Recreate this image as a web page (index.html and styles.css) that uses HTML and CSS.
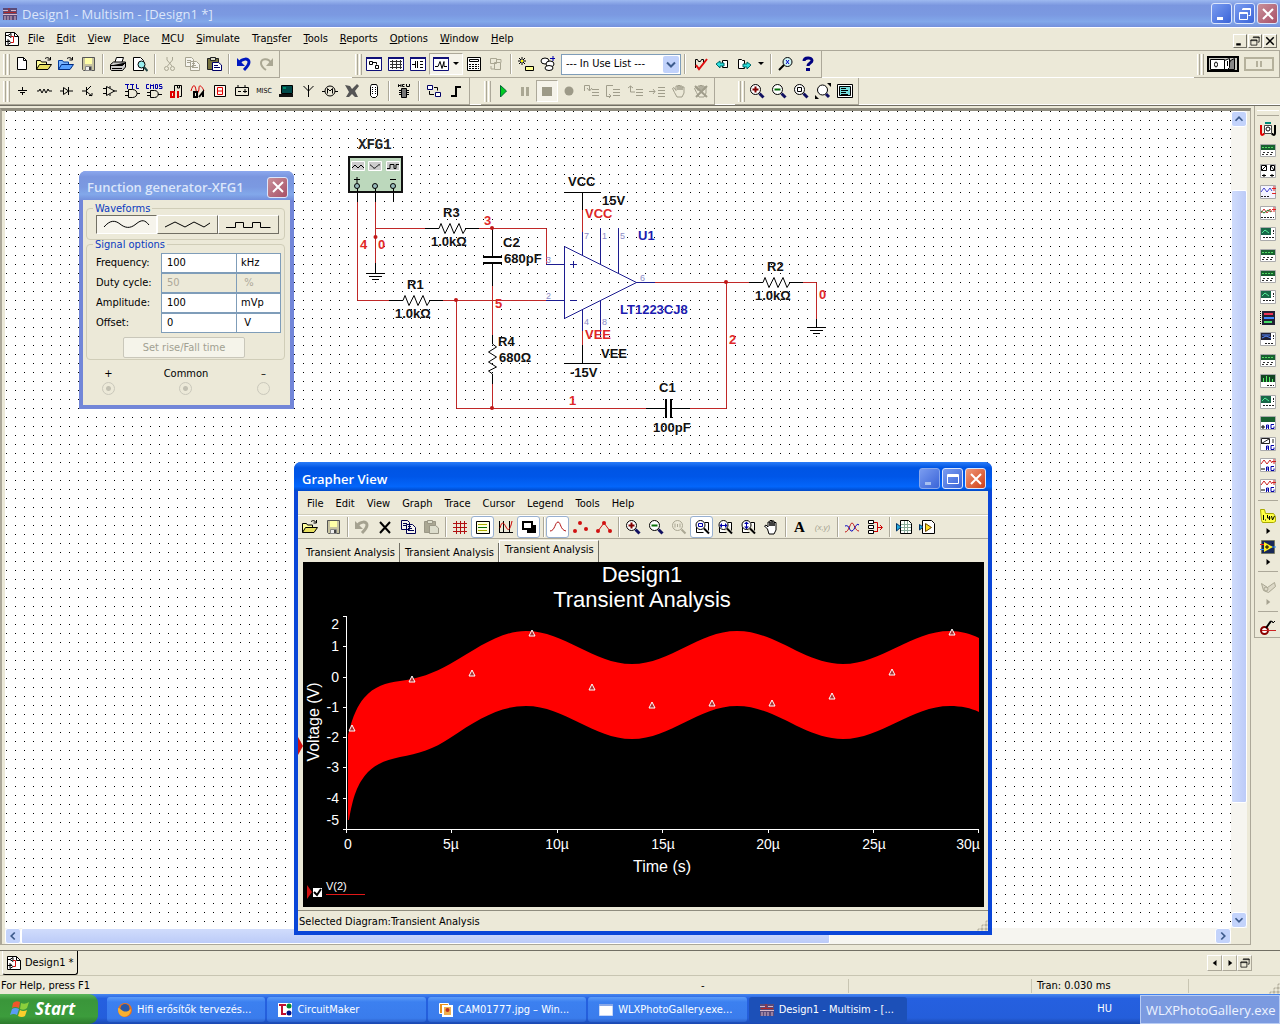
FILE: index.html
```html
<!DOCTYPE html>
<html lang="en">
<head>
<meta charset="utf-8">
<title>Design1 - Multisim - [Design1 *]</title>
<link rel="stylesheet" href="styles.css">
</head>
<body>
<svg class="defs" aria-hidden="true">
  <symbol id="app" viewBox="0 0 16 16"><path fill="#5a4a78" d="M1 2h14v12H1z"/><path stroke="#d8b8c8" fill="none" d="M1 4.500h5M9 4.500h5M1 8.500h14M3 10v4M6 10v4M9 10v4M13 10v4"/><path stroke="#b02828" d="M2 6.500h12M7 2v5"/></symbol>
  <symbol id="doc" viewBox="0 0 16 16"><path fill="#fff" stroke="#000" d="M1.500 1.500h9l4 4v9h-13z"/><path fill="none" stroke="#000" d="M10.500 1.500v4h4M1 4.500h3l3-2v4l-3-2M2 10.500h4l-2-2v5l3-2"/><path fill="none" stroke="#d01010" d="M7 5.500h2.500v6H7"/></symbol>
  <symbol id="new" viewBox="0 0 16 16"><path fill="#fff" stroke="#000" d="M3.500 1.500h6l3 3v9h-9z"/><path fill="none" stroke="#000" d="M9.500 1.500v3h3"/></symbol>
  <symbol id="open" viewBox="0 0 16 16"><path fill="#ffff9c" stroke="#000" d="M.500 13.500v-9h4l1 1.500h5v2.500"/><path fill="#e8e060" stroke="#000" d="M.500 13.500l3-5h12l-3.500 5z"/><path fill="none" stroke="#000" d="M9 2.500c2-1.500 4-1 5 1M14.500 1v3h-3"/></symbol>
  <symbol id="openb" viewBox="0 0 16 16"><path fill="#7ab4ff" stroke="#003a9c" d="M.500 13.500v-9h4l1 1.500h5v2.500"/><path fill="#58a0ff" stroke="#002a80" d="M.500 13.500l3-5h12l-3.500 5z"/><path fill="none" stroke="#000" d="M9 2.500c2-1.500 4-1 5 1M14.500 1v3h-3"/></symbol>
  <symbol id="save" viewBox="0 0 16 16"><path fill="#c8c4a0" stroke="#555" d="M2.500 1.500h12v13h-11l-1-1z"/><path fill="#ffffa8" d="M5 2h7v6H5z"/><path fill="#eee" stroke="#888" d="M5.500 10.500h6v4h-6z"/><path fill="#444" d="M9 11h2v3H9z"/></symbol>
  <symbol id="print" viewBox="0 0 16 16"><path fill="#fff" stroke="#000" d="M5 6l1.500-4.500h7L12 6"/><path fill="#ccc" stroke="#000" d="M.500 8.500l3-2.500h12v5l-3 3.500H1.500l-1-1z"/><path stroke="#000" d="M1 9.500h11.500l3-3M2 12.500h10"/></symbol>
  <symbol id="preview" viewBox="0 0 16 16"><path fill="#fff" stroke="#000" d="M1.500 1.500h7l3 3v10h-10z"/><circle cx="9.500" cy="8.500" r="3.500" fill="#9ee" stroke="#000"/><path stroke="#244" stroke-width="2" d="M12 11l3.500 4"/></symbol>
  <symbol id="cut" viewBox="0 0 16 16"><path fill="none" stroke="#a9a693" d="M5 1v3l5 6M10.500 1v3L5.500 10"/><circle cx="4.500" cy="12.500" r="2" fill="none" stroke="#a9a693"/><circle cx="10.500" cy="12.500" r="2" fill="none" stroke="#a9a693"/></symbol>
  <symbol id="copy" viewBox="0 0 16 16"><path fill="#f6f5ee" stroke="currentColor" d="M1.500 1.500h6l2 2v7h-8zM6.500 5.500h6l3 3v6h-9z"/><path stroke="currentColor" d="M3 4.500h4M3 6.500h3M8 9.500h4M8 11.500h6M8 7.500h3"/></symbol>
  <symbol id="paste" viewBox="0 0 16 16"><path fill="#77733f" stroke="#222" d="M1.500 2.500h11v11h-11z"/><path fill="#ddc" stroke="#222" d="M4.500 1.500h5v3h-5z"/><path fill="#fff" stroke="#006" d="M6.500 6.500h6l3 2.500v5.500h-9z"/><path stroke="#006" d="M8 9.500h4M8 11.500h6"/></symbol>
  <symbol id="pasteg" viewBox="0 0 16 16"><path fill="#aaa793" stroke="#9a9786" d="M1.500 2.500h11v11h-11z"/><path fill="#ddc" stroke="#9a9786" d="M4.500 1.500h5v3h-5zM6.500 6.500h6l3 2.500v5.500h-9z"/></symbol>
  <symbol id="undo" viewBox="0 0 16 16"><path fill="none" stroke="currentColor" stroke-width="3" d="M3 7c3-5 10-5 10-1 0 3-2 5-5 8"/><path fill="currentColor" d="M1 2v8h8z"/></symbol>
  <symbol id="redo" viewBox="0 0 16 16"><path fill="none" stroke="#aaa793" stroke-width="2" d="M13 7C10 1 3 3 3 7c0 3 2 5 5 7"/><path fill="#aaa793" d="M15 2v8H8z"/></symbol>
  <symbol id="hier" viewBox="0 0 16 16"><path fill="#fff" stroke="#101078" d="M.500 1.500h15v13H.500z"/><path fill="#101078" d="M0 1h16v2H0z"/><path fill="none" stroke="#000" d="M3.500 5.500h3v3h-3zM9.500 9.500h3v3h-3zM7 6.500h3.500v2"/></symbol>
  <symbol id="grid" viewBox="0 0 16 16"><path fill="#fff" stroke="#101078" d="M.500 1.500h15v13H.500z"/><path fill="#101078" d="M0 1h16v2H0z"/><path stroke="#333" d="M2 5.500h12M2 8.500h12M2 11.500h12M4.500 4v9M8.500 4v9M12.500 4v9"/></symbol>
  <symbol id="capw" viewBox="0 0 16 16"><path fill="#fff" stroke="#101078" d="M.500 1.500h15v13H.500z"/><path fill="#101078" d="M0 1h16v2H0z"/><path stroke="#000" d="M2 8.500h3M5.500 5v7M7.500 5v7M10 5.500h3M10 8.500h3M10 11.500h3"/></symbol>
  <symbol id="wavew" viewBox="0 0 16 16"><path fill="#fff" stroke="#101078" d="M.500 1.500h15v13H.500z"/><path fill="#101078" d="M0 1h16v2H0z"/><path fill="none" stroke="#000" d="M2 10.500h3l2-5 2 7 2-7v5h3"/></symbol>
  <symbol id="calc" viewBox="0 0 16 16"><path fill="#fff" stroke="#000" d="M1.500 1.500h13v13h-13zM3.500 3.500h9v2h-9z"/><path stroke="#000" stroke-dasharray="2 1" d="M3 8.500h10M3 10.500h10M3 12.500h10"/></symbol>
  <symbol id="dup" viewBox="0 0 16 16"><path fill="none" stroke="#aaa793" d="M2.500 2.500h6v5h-6zM6.500 6.500h6v7h-6zM9 3.500h4v3M3 10v3h3"/></symbol>
  <symbol id="spark" viewBox="0 0 16 16"><path stroke="#000" d="M4 1v8M0 5h8M1 2l6 6M7 2L1 8"/><path fill="#ff0" d="M3 4h2v2H3z"/><path fill="#ffff90" stroke="#000" d="M7.500 10.500h8v4h-8z"/></symbol>
  <symbol id="db" viewBox="0 0 16 16"><g fill="#fff" stroke="#000"><ellipse cx="5" cy="5" rx="4" ry="3"/><ellipse cx="10" cy="8" rx="4" ry="3"/><ellipse cx="9" cy="12" rx="4" ry="2.500"/></g><path stroke="#00a" d="M10 2.500h5M13 0v5"/></symbol>
  <symbol id="erc" viewBox="0 0 16 16"><path fill="none" stroke="#000" d="M3.500 12V3.500h2l1 2h2l1-2h2V8"/><path fill="none" stroke="#e01010" stroke-width="2" d="M4 9l3 4 8-10"/></symbol>
  <symbol id="back" viewBox="0 0 16 16"><path fill="#fff" stroke="#000" d="M8.500 4.500h5v7h-5z"/><path fill="#2ce0e0" stroke="#066" d="M2 8l4-3v2h4v3H6v2z"/></symbol>
  <symbol id="fwd" viewBox="0 0 16 16"><path fill="#fff" stroke="#000" d="M2.500 3.500h3l1 1h2v8h-6z"/><path fill="#2ce0e0" stroke="#066" d="M15 9l-4-3v2H7v3h4v2z"/></symbol>
  <symbol id="find" viewBox="0 0 16 16"><circle cx="9.500" cy="6" r="4.500" fill="#d0f4f4" stroke="#000"/><path stroke="#000" stroke-width="2" d="M6 9l-5 5"/><path stroke="#00c" d="M8 4l3 4M8 8l3-4"/></symbol>
  <symbol id="help" viewBox="0 0 16 16"><path fill="none" stroke="#000080" stroke-width="3" d="M4 5c0-4 8-4 8-.500 0 2.500-4 2.500-4 5.500"/><path fill="#000080" d="M6 12h4v3H6z"/></symbol>
  <symbol id="src" viewBox="0 0 16 16"><path fill="none" stroke="#000" d="M8.500 4v3M4 7.500h9M6 9.500h5M8.500 10v2"/></symbol>
  <symbol id="res" viewBox="0 0 16 16"><path fill="none" stroke="#000" d="M1 8h2l1-2 2 4 2-4 2 4 2-4 1 2h3"/></symbol>
  <symbol id="dio" viewBox="0 0 16 16"><path fill="none" stroke="#000" d="M2 8h3M5.500 4.500v7l5-3.500zM10.500 4v8M11 8h4"/></symbol>
  <symbol id="tran" viewBox="0 0 16 16"><path fill="none" stroke="#000" d="M2 8h4M6.500 4v8M7 7l4-4M7 9l5 4M9 12.500h3V10"/></symbol>
  <symbol id="amp" viewBox="0 0 16 16"><path fill="none" stroke="#000" d="M4.500 3.500v9l8-4.500zM1 5.500h3M1 10.500h3M12 8h3M8 3v2M8 11v2"/></symbol>
  <symbol id="ttl" viewBox="0 0 18 16"><path fill="none" stroke="#00a" d="M2 1.500h4M4.500 2v4M7 1.500h4M9.500 2v4M13.500 1v4.500H16"/><path fill="none" stroke="#000" d="M5.500 6.500h4c6 0 6 8 0 8h-4zM2 8.500h3M2 12.500h3M14 10.500h3"/></symbol>
  <symbol id="cmos" viewBox="0 0 18 16"><path fill="none" stroke="#00a" d="M4 1.500H1.500v4H4M5.500 6V1.500L7 3l1.500-1.500V6M10.500 1.500h2v4h-2zM17 1.500h-2.500v2H17v2h-3"/><path fill="none" stroke="#000" d="M5.500 7.500h4c5 0 5 7 0 7h-4zM2 9.500h3M2 12.500h3M13 11.500h4"/></symbol>
  <symbol id="dig" viewBox="0 0 16 16"><path fill="none" stroke="#000" d="M6.500 8V2.500h7v11h-2M9.500 3v2h2V3"/><path fill="none" stroke="#d00" stroke-width="2" d="M3 9h3v5H3zM10 8v7"/></symbol>
  <symbol id="mix" viewBox="0 0 16 16"><path fill="none" stroke="#d00" d="M1 8c2-7 4-7 5-1s3 2 3-2 3-2 5 3"/><path fill="none" stroke="#000" stroke-width="2" d="M4 9h3v5H4zM9 14l4-5v5"/></symbol>
  <symbol id="ind" viewBox="0 0 16 16"><path fill="#fff4ee" stroke="#000" d="M2.500 2.500h11v11h-11z"/><path fill="none" stroke="#d00" d="M5.500 4.500h5v7h-5zM5 8h6"/></symbol>
  <symbol id="pow" viewBox="0 0 16 16"><path fill="none" stroke="#000" d="M1.500 4.500h13v8h-13zM4 2v2M11 2v2M4 8.500h3M9 8.500h4M11 6v4"/></symbol>
  <symbol id="per" viewBox="0 0 16 16"><path fill="#004848" stroke="#000" d="M3.500 2.500h11v8h-11z"/><path fill="#111" d="M1 11h14v3H1z"/><path stroke="#0c8" d="M5 5h3"/></symbol>
  <symbol id="rf" viewBox="0 0 16 16"><path fill="none" stroke="#000" d="M8.500 2v12M3.500 3l5 5 5-5"/></symbol>
  <symbol id="mot" viewBox="0 0 16 16"><circle cx="8" cy="8" r="5" fill="none" stroke="#000"/><path fill="none" stroke="#000" d="M5.500 10.500v-5L8 8l2.500-2.500v5M0 8.500h3M13 8.500h3"/></symbol>
  <symbol id="ni" viewBox="0 0 16 16"><path fill="#555" d="M1 2l5 1 2 3 5-5 2 2-4 5 3 6h-3L8 11l-3 3H2l3-5z"/></symbol>
  <symbol id="conn" viewBox="0 0 16 16"><path fill="#fff" stroke="#000" d="M5.500 1.500h5l1 2v9l-2 2h-3l-2-2v-9z"/><path stroke="#000" stroke-dasharray="1 1" d="M6.500 4v8M9.500 4v8"/></symbol>
  <symbol id="mcu" viewBox="0 0 16 16"><path fill="none" stroke="#000" d="M2.500 4V1.500L4 3l1-1.500V4M8.500 1.500h-2v2h2M10.500 1v2.500h3V1"/><path fill="#777" stroke="#000" d="M5.500 5.500h5v9h-5z"/><path stroke="#000" stroke-dasharray="3 5" d="M3 7.500h10M3 9.500h10M3 11.500h10"/></symbol>
  <symbol id="hb" viewBox="0 0 16 16"><path fill="#fff" stroke="#006" d="M1.500 2.500h5v4h-5zM9.500 9.500h5v4h-5z"/><path fill="none" stroke="#000" d="M8 4.500h3.500v3M3.500 8v3.500H8"/></symbol>
  <symbol id="bus" viewBox="0 0 16 16"><path fill="none" stroke="#000" stroke-width="2" d="M3 13h5V4h5"/></symbol>
  <symbol id="play" viewBox="0 0 16 16"><path fill="#0c2" stroke="#063" d="M5.500 2.500l6 5.500-6 6z"/></symbol>
  <symbol id="pause" viewBox="0 0 16 16"><path fill="#aaa793" d="M4 4h3v9H4zM9 4h3v9H9z"/></symbol>
  <symbol id="stop" viewBox="0 0 16 16"><path fill="#9d9a88" d="M3 4h10v9H3z"/></symbol>
  <symbol id="rec" viewBox="0 0 16 16"><circle cx="8" cy="8" r="4.500" fill="#9d9a88"/></symbol>
  <symbol id="step" viewBox="0 0 16 16"><path fill="none" stroke="#a09d8b" d="M1.500 8V2.500h5v5M4 5l2.500 3L9 5M9 6.500h7M9 9.500h7M9 12.500h7"/></symbol>
  <symbol id="step2" viewBox="0 0 16 16"><path fill="none" stroke="#a09d8b" d="M8 2.500H1.500v11H6M4 11l2 2-2 2M8 6.500h7M8 9.500h7M8 12.500h7"/></symbol>
  <symbol id="step3" viewBox="0 0 16 16"><path fill="none" stroke="#a09d8b" d="M1 5l2.500-2L6 5M3.500 3v6H8M9 6.500h7M9 9.500h7M9 12.500h7"/></symbol>
  <symbol id="step4" viewBox="0 0 16 16"><path fill="none" stroke="#a09d8b" d="M0 8.500h6M4 6l2 2.500L4 11M9 4.500h7M9 7.500h7M9 10.500h7M9 13.500h7"/></symbol>
  <symbol id="hand" viewBox="0 0 16 16"><path fill="#fff" stroke="#000" d="M4.500 10l-3-3 1.500-1 2 2V3h2v4V1.500h2V7l0-5h2v5l0-3.500h2V11l-2 4h-5z"/></symbol>
  <symbol id="handg" viewBox="0 0 16 16"><path fill="none" stroke="#a09d8b" d="M3.500 9.500l-2-4 1.500-1 2 3V3h2v4V2.500h2V7l0-4h2v4l0-3h2V10l-2 4h-5z"/></symbol>
  <symbol id="handx" viewBox="0 0 16 16"><use href="#handg"/><path stroke="#a09d8b" stroke-width="2" d="M2 3l12 11M14 3L3 14"/></symbol>
  <symbol id="lens" viewBox="0 0 16 16"><circle cx="6.500" cy="6.500" r="5" fill="#fff" stroke="#000"/><path stroke="#101060" stroke-width="3" d="M10.500 10.500l4 4"/></symbol>
  <symbol id="zin" viewBox="0 0 16 16"><use href="#lens"/><path stroke="#800000" stroke-width="2" d="M3.500 6.500h6M6.500 3.500v6"/></symbol>
  <symbol id="zout" viewBox="0 0 16 16"><use href="#lens"/><path stroke="#087008" stroke-width="2" d="M3.500 6.500h6"/></symbol>
  <symbol id="zarea" viewBox="0 0 16 16"><use href="#lens"/><path fill="none" stroke="#000" d="M4.500 4.500h4v4h-4z"/></symbol>
  <symbol id="zfit" viewBox="0 0 16 16"><circle cx="7.500" cy="7" r="5" fill="#fff" stroke="#000"/><path stroke="#101060" stroke-width="3" d="M11 11l3 3"/><path d="M12 0h4v4zM0 12v4h4z"/></symbol>
  <symbol id="full" viewBox="0 0 16 16"><path fill="#fff" stroke="#000" d="M.500 1.500h15v13H.500z"/><path fill="#7dd" stroke="#000" d="M2.500 3.500h11v9h-11z"/><path stroke="#000" d="M4 5.500h5M4 7.500h7M4 9.500h5M4 11.500h7"/></symbol>
  <symbol id="zgray" viewBox="0 0 16 16"><circle cx="6.500" cy="6.500" r="5" fill="none" stroke="#aaa793"/><path stroke="#aaa793" stroke-width="2" d="M10.500 10.500l4 4"/><path stroke="#aaa793" d="M4 4.500v4M6.500 5v3M9 4.500v4"/></symbol>
  <symbol id="zpage" viewBox="0 0 16 16"><path fill="#fff" stroke="#000" d="M2.500 8v5.500h7M11 3.500h3.500v8"/><circle cx="6.500" cy="6" r="4.500" fill="#fff" stroke="#000"/><path stroke="#000" stroke-width="2" d="M10 9.500l5 5"/></symbol>
  <symbol id="zbox" viewBox="0 0 16 16"><use href="#zpage"/><path fill="none" stroke="#00a" d="M4.500 4.500h4v3h-4z"/></symbol>
  <symbol id="zhor" viewBox="0 0 16 16"><use href="#zpage"/><path stroke="#00a" d="M3 6.500h7"/><path fill="#00a" d="M2.500 6.500L5 4v5zM10.500 6.500L8 4v5z"/></symbol>
  <symbol id="zver" viewBox="0 0 16 16"><use href="#zpage"/><path stroke="#00a" d="M6.500 3v7"/><path fill="#00a" d="M6.500 2.500L4 5h5zM6.500 10L4 7.500h5z"/></symbol>
  <symbol id="del" viewBox="0 0 16 16"><path stroke="#000" stroke-width="2" d="M3 3l10 11M13 3L3 14"/></symbol>
  <symbol id="rgrid" viewBox="0 0 16 16"><path stroke="#b01010" d="M1 4.500h14M1 8.500h14M1 12.500h14M4.500 2v13M8.500 2v13M12.500 2v13"/></symbol>
  <symbol id="legend" viewBox="0 0 16 16"><path fill="#ffffe0" stroke="#000" d="M1.500 2.500h13v12h-13z"/><path stroke="#aa0" d="M3 5.500h9M3 11.500h9"/><path stroke="#060" d="M3 8.500h9"/></symbol>
  <symbol id="curs" viewBox="0 0 16 16"><path fill="none" stroke="#000" d="M1.500 2v12M1 13.500h14M5.500 2v12M11.500 2v12"/><path fill="none" stroke="#c00" d="M2 9c2-8 4-5 6-1s4 4 6-6"/></symbol>
  <symbol id="bw" viewBox="0 0 16 16"><path fill="#fff" stroke="#000" stroke-width="2" d="M2 3h9v7H2z"/><path d="M6 6h9v8H6z"/><path fill="#fff" d="M6 6h4v3H6z"/></symbol>
  <symbol id="line" viewBox="0 0 16 16"><path fill="none" stroke="#b01010" d="M0 12c5 0 5-9 8-9s2 8 8 9"/></symbol>
  <symbol id="dots" viewBox="0 0 16 16"><g fill="#d01010"><circle cx="2" cy="12" r="2"/><circle cx="7" cy="4" r="2"/><circle cx="13" cy="10" r="2"/></g></symbol>
  <symbol id="ldots" viewBox="0 0 16 16"><path fill="none" stroke="#d01010" d="M2 12l6-8 6 8"/><g fill="#d01010"><circle cx="2" cy="12" r="2"/><circle cx="8" cy="4" r="2"/><circle cx="14" cy="12" r="2"/></g></symbol>
  <symbol id="over" viewBox="0 0 16 16"><path fill="none" stroke="#c01010" d="M1 13c4 0 5-9 7-9s3 8 7 8"/><path fill="none" stroke="#0000c0" d="M1 7c5-2 4 6 7 5s4-9 7-6"/></symbol>
  <symbol id="xport" viewBox="0 0 16 16"><path fill="#fff" stroke="#000" d="M1.500 1.500h5v3h-5zM1.500 6.500h5v3h-5zM1.500 11.500h5v3h-5z"/><path fill="none" stroke="#c00" d="M7 3.500h3.500v9M7 12.500h4M10 8.500h5M13 6l2.500 2.500L13 11"/></symbol>
  <symbol id="xls" viewBox="0 0 16 16"><path fill="#fff" stroke="#000" d="M4.500 1.500h8l3 3v10h-11z"/><path stroke="#8a9" d="M5 5.500h10M5 8.500h10M5 11.500h10M8.500 2v12M11.500 2v12"/><path fill="#2ad" stroke="#036" d="M.500 4.500L5 8l-4.500 4z"/></symbol>
  <symbol id="lv" viewBox="0 0 16 16"><path fill="#fff" stroke="#000" d="M3.500 1.500h9l3 3v10h-12z"/><path fill="#fd2" stroke="#640" d="M6.500 4.500l6 4-6 4z"/><path fill="#2ad" stroke="#036" d="M.500 5.500L4 8l-3.500 3z"/></symbol>
  <symbol id="m1" viewBox="0 0 16 16"><path fill="none" stroke="#d00" stroke-width="2" d="M1 4v8c0 3 3 2 3 0"/><path fill="none" stroke="#000" stroke-width="2" d="M15 4v8c0 3-3 2-3 0"/><path fill="#fff" stroke="#444" d="M4.500 4.500h7v8h-7z"/><circle cx="8" cy="8" r="2" fill="#fff" stroke="#000"/><path fill="#087" d="M5 1h6v2H5z"/></symbol>
  <symbol id="inst" viewBox="0 0 16 16"><path fill="#fff" stroke="#aaa" d="M.500 2.500h15v12H.500z"/><path fill="#186030" d="M1 3h14v5H1z"/><path stroke="#5d6" stroke-dasharray="2 1" d="M2 5.500h12"/><path stroke="#333" stroke-dasharray="2 2" d="M3 10.500h11M2 12.500h11"/></symbol>
  <symbol id="inst2" viewBox="0 0 16 16"><path fill="#fff" stroke="#aaa" d="M.500 1.500h15v13H.500z"/><path fill="none" stroke="#000" d="M1.500 2.500h5v5h-5zM10.500 2.500h4v5h-4zM2 7l4-4M11 3l3 4M2 12.500h4M4 11v3M10 12.500h4M12 11v3"/></symbol>
  <symbol id="osc" viewBox="0 0 16 16"><path fill="#f4f4ff" stroke="#aaa" d="M.500 1.500h15v13H.500z"/><path fill="none" stroke="#44c" d="M1 8l3-4 3 4 3-4 2 3"/><path stroke="#d22" d="M12 4.500h4M14 2v5M12 9.500h4"/><path stroke="#222" stroke-dasharray="2 1" d="M1 12.500h8"/></symbol>
  <symbol id="osc2" viewBox="0 0 16 16"><path fill="#fff" stroke="#aaa" d="M.500 1.500h15v13H.500z"/><path fill="none" stroke="#c33" d="M1 8l3-4 3 4 3-4 2 3"/><path fill="none" stroke="#272" d="M1 6l3 2 4-3 3 2"/><path stroke="#d22" d="M12 4.500h4M14 2v5"/><path stroke="#222" stroke-dasharray="2 1" d="M1 12.500h13"/></symbol>
  <symbol id="bode" viewBox="0 0 16 16"><path fill="#fff" stroke="#aaa" d="M.500 1.500h15v13H.500z"/><path fill="#186848" d="M1 2h10v7H1z"/><path fill="none" stroke="#5e9" d="M2 7l3-3 4 3"/><path stroke="#222" stroke-dasharray="2 1" d="M3 11.500h11M13.500 4v4"/></symbol>
  <symbol id="iv" viewBox="0 0 16 16"><path fill="#fff" stroke="#aaa" d="M.500 1.500h15v13H.500z"/><path fill="#223" d="M1 2h10v7H1z"/><path fill="none" stroke="#58f" d="M2 4h8M2 7l4-2 5 2"/><path stroke="#222" stroke-dasharray="2 1" d="M5 12.500h9M13.500 4v4"/></symbol>
  <symbol id="logic" viewBox="0 0 16 16"><path fill="#223" d="M2 1h13v14H2z"/><path stroke="#e35" stroke-width="2" d="M4 4h9"/><path stroke="#48f" stroke-width="2" d="M4 8h10"/><path stroke="#4d6" stroke-width="2" d="M4 12h8"/><path stroke="#000" stroke-dasharray="1 1" d="M.500 1v14"/></symbol>
  <symbol id="spec" viewBox="0 0 16 16"><path fill="#fff" stroke="#aaa" d="M.500 1.500h15v13H.500z"/><path fill="#134422" d="M1 2h14v7H1z"/><path stroke="#5e6" d="M3.500 9V5M6.500 9V3M9.500 9V4M12.500 9V6"/><path stroke="#222" stroke-dasharray="2 1" d="M7 12.500h7"/></symbol>
  <symbol id="ag" viewBox="0 0 16 16"><path fill="#fff" stroke="#aaa" d="M.500 1.500h15v13H.500z"/><path fill="#186030" d="M1 2h14v5H1z"/><path fill="none" stroke="#00a" d="M6.500 14v-4h2v4M6 12h3M14 9.500h-3v4h3v-2"/><path stroke="#000" d="M1 12h4M3 10v4"/></symbol>
  <symbol id="ag2" viewBox="0 0 16 16"><path fill="#fff" stroke="#aaa" d="M.500 1.500h15v13H.500z"/><path fill="none" stroke="#222" d="M1.500 7.500L9 3M1.500 2.500v5h8v-5zM13 3v4"/><path fill="none" stroke="#00a" d="M6.500 14v-4h2v4M6 12h3M14 9.500h-3v4h3v-2"/></symbol>
  <symbol id="ag3" viewBox="0 0 16 16"><path fill="#fff" stroke="#aaa" d="M.500 1.500h15v13H.500z"/><path fill="none" stroke="#c22" d="M1 7l3-4 3 4 3-4 2 3M12 4.500h4M14 2v5"/><path fill="none" stroke="#00a" d="M6.500 14v-4h2v4M6 12h3M14 9.500h-3v4h3v-2"/><path stroke="#000" d="M1 12h4"/></symbol>
  <symbol id="volt" viewBox="0 0 16 16"><path fill="#ff4" stroke="#aa0" d="M.500 1.500h4l1 4h8l2 3v5l-2 1h-11l-1-2z"/><path fill="none" stroke="#000" d="M3.500 7v5M5 12h1M7.500 7v3h3M9.500 8v4M11.500 8l1 4 2-4"/></symbol>
  <symbol id="lvi" viewBox="0 0 16 16"><path fill="#182858" stroke="#663" stroke-dasharray="1 1" d="M1.500 1.500h13v13h-13z"/><path fill="#fe2" d="M4 3l9 5-9 5z"/><path stroke="#e22" d="M0 5.500h4"/><path stroke="#28f" d="M0 10.500h4M12 8h4"/><path stroke="#000" d="M5 8h4M7 6v4"/></symbol>
  <symbol id="clampg" viewBox="0 0 16 16"><path fill="#ddd9c8" stroke="#aaa793" d="M1.500 4.500l6 4 7-5 1 4-7 6-5-2z"/><circle cx="6" cy="10" r="2" fill="none" stroke="#aaa793"/></symbol>
  <symbol id="probe" viewBox="0 0 16 16"><circle cx="4.500" cy="11.500" r="3.500" fill="#fff" stroke="#800" stroke-width="2"/><path stroke="#c22" d="M2 11.500h14"/><path stroke="#000" stroke-width="2" d="M6 9l5-7"/><path fill="none" stroke="#000" d="M10 3l2-1 1 2 2-2"/></symbol>
  <symbol id="min" viewBox="0 0 16 16"><path fill="currentColor" d="M3 11h6v3H3z"/></symbol>
  <symbol id="rest" viewBox="0 0 16 16"><path fill="none" stroke="currentColor" d="M5.500 2.500h8v7h-2M5 3.500h9M2.500 6.500h8v7h-8zM2 7.500h9"/></symbol>
  <symbol id="max" viewBox="0 0 16 16"><path fill="none" stroke="currentColor" d="M2.500 3.500h11v9h-11zM2 4.500h12M2 5.500h12"/></symbol>
  <symbol id="x" viewBox="0 0 16 16"><path stroke="currentColor" stroke-width="2" d="M3 3l10 10M13 3L3 13"/></symbol>
  <symbol id="caret" viewBox="0 0 8 8"><path d="M1 2h6L4 5z"/></symbol>
  <symbol id="right" viewBox="0 0 8 8"><path fill="currentColor" d="M2 0l5 4-5 4z"/></symbol>
  <symbol id="left" viewBox="0 0 8 8"><path fill="currentColor" d="M6 0L1 4l5 4z"/></symbol>
  <symbol id="chev" viewBox="0 0 16 16"><path fill="none" stroke="#3d5b8c" stroke-width="2" d="M4 10l4-4 4 4"/></symbol>
  <symbol id="tri" viewBox="0 0 8 8"><path fill="#a33" stroke="#fff" d="M4 1L1 7h6z"/></symbol>
  <symbol id="rh" viewBox="0 0 54 12"><path fill="none" stroke="#000" d="M0 6.500h14l2-5 4 10 5-10 4 10 5-10 4 10 3-5h13"/></symbol>
</svg>

<header class="titlebar">
  <svg class="ic"><use href="#app"/></svg>
  <h1>Design1 - Multisim - [Design1 *]</h1>
  <div class="winbtns">
    <button class="wb" aria-label="Minimize"><svg class="ic"><use href="#min"/></svg></button>
    <button class="wb" aria-label="Restore"><svg class="ic"><use href="#rest"/></svg></button>
    <button class="wb close" aria-label="Close"><svg class="ic"><use href="#x"/></svg></button>
  </div>
</header>

<nav class="menubar">
  <svg class="ic"><use href="#doc"/></svg>
  <button><u>F</u>ile</button><button><u>E</u>dit</button><button><u>V</u>iew</button><button><u>P</u>lace</button><button><u>M</u>CU</button><button><u>S</u>imulate</button><button>Tra<u>n</u>sfer</button><button><u>T</u>ools</button><button><u>R</u>eports</button><button><u>O</u>ptions</button><button><u>W</u>indow</button><button><u>H</u>elp</button>
  <div class="childbtns">
    <button aria-label="Minimize document"><svg><use href="#min"/></svg></button><button aria-label="Restore document"><svg><use href="#rest"/></svg></button><button aria-label="Close document"><svg><use href="#x"/></svg></button>
  </div>
</nav>

<div class="toolrow">
  <div class="bar"><i class="grip"></i>
    <button aria-label="New"><svg><use href="#new"/></svg></button><button aria-label="Open"><svg><use href="#open"/></svg></button><button aria-label="Open sample"><svg><use href="#openb"/></svg></button><button aria-label="Save"><svg><use href="#save"/></svg></button><i class="sep"></i>
    <button aria-label="Print"><svg><use href="#print"/></svg></button><button aria-label="Print preview"><svg><use href="#preview"/></svg></button><i class="sep"></i>
    <button aria-label="Cut"><svg><use href="#cut"/></svg></button><button class="dim" aria-label="Copy"><svg><use href="#copy"/></svg></button><button aria-label="Paste"><svg><use href="#paste"/></svg></button><i class="sep"></i>
    <button class="blue" aria-label="Undo"><svg><use href="#undo"/></svg></button><button aria-label="Redo"><svg><use href="#redo"/></svg></button>
  </div>
  <div class="bar bar-main"><i class="grip"></i>
    <button aria-label="Design toolbox"><svg><use href="#hier"/></svg></button><button aria-label="Spreadsheet view"><svg><use href="#grid"/></svg></button><button aria-label="SPICE netlist"><svg><use href="#capw"/></svg></button><button class="split" aria-label="Grapher"><svg><use href="#wavew"/></svg><svg class="car"><use href="#caret"/></svg></button><button aria-label="Postprocessor"><svg><use href="#calc"/></svg></button><button aria-label="Parent sheet"><svg><use href="#dup"/></svg></button><i class="sep"></i>
    <button aria-label="Component wizard"><svg><use href="#spark"/></svg></button><button aria-label="Database manager"><svg><use href="#db"/></svg></button>
    <span class="combo"><select aria-label="In use list"><option>--- In Use List ---</option></select><svg class="drop"><use href="#chev"/></svg></span><i class="sep"></i>
    <button aria-label="Rules check"><svg><use href="#erc"/></svg></button><button aria-label="Back annotate"><svg><use href="#back"/></svg></button><button aria-label="Forward annotate"><svg><use href="#fwd"/></svg></button><button class="slim" aria-label="Annotate options"><svg class="car"><use href="#caret"/></svg></button><i class="sep"></i>
    <button aria-label="Find examples"><svg><use href="#find"/></svg></button><button aria-label="Help"><svg><use href="#help"/></svg></button>
  </div>
  <div class="bar bar-sim"><i class="grip"></i>
    <button class="switch" aria-label="Simulation switch"><svg viewBox="0 0 32 18"><path fill="#c8c8c0" stroke="#000" stroke-width="2" d="M1 2h30v14H1z"/><path fill="#888" stroke="#000" d="M23.500 5.500l4-2v11h-8z"/><path fill="#fff" stroke="#000" d="M3.500 4.500h14v10h-14zM17.500 5.500l5-2v9l-2 2h-3z"/><ellipse cx="9" cy="9.500" rx="1.500" ry="2.500" fill="none" stroke="#000"/><path stroke="#000" d="M20.500 6v5"/></svg></button>
    <button class="switch" aria-label="Pause simulation"><svg viewBox="0 0 32 18"><path fill="none" stroke="#b5b19c" stroke-width="2" d="M2 3h28v12H2z"/><path stroke="#b5b19c" stroke-width="2" d="M14 6v6M18 6v6"/></svg></button>
  </div>
</div>
<div class="toolrow">
  <div class="bar"><i class="grip"></i>
    <button aria-label="Source"><svg><use href="#src"/></svg></button><button aria-label="Basic"><svg><use href="#res"/></svg></button><button aria-label="Diode"><svg><use href="#dio"/></svg></button><button aria-label="Transistor"><svg><use href="#tran"/></svg></button><button aria-label="Analog"><svg><use href="#amp"/></svg></button><button class="wide" aria-label="TTL"><svg><use href="#ttl"/></svg></button><button class="wide" aria-label="CMOS"><svg><use href="#cmos"/></svg></button><button aria-label="Digital"><svg><use href="#dig"/></svg></button><button aria-label="Mixed"><svg><use href="#mix"/></svg></button><button aria-label="Indicator"><svg><use href="#ind"/></svg></button><button aria-label="Power"><svg><use href="#pow"/></svg></button><button class="misc">MISC</button><button aria-label="Peripherals"><svg><use href="#per"/></svg></button><button aria-label="RF"><svg><use href="#rf"/></svg></button><button aria-label="Electromechanical"><svg><use href="#mot"/></svg></button><button aria-label="NI component"><svg><use href="#ni"/></svg></button><button aria-label="Connector"><svg><use href="#conn"/></svg></button><i class="sep"></i>
    <button aria-label="MCU"><svg><use href="#mcu"/></svg></button><i class="sep"></i>
    <button aria-label="Hierarchical block"><svg><use href="#hb"/></svg></button><button aria-label="Bus"><svg><use href="#bus"/></svg></button>
  </div>
  <div class="bar bar-run"><i class="grip"></i>
    <button aria-label="Run"><svg><use href="#play"/></svg></button><button aria-label="Pause"><svg><use href="#pause"/></svg></button><button class="down" aria-label="Stop"><svg><use href="#stop"/></svg></button><button aria-label="Record"><svg><use href="#rec"/></svg></button><button aria-label="Step into"><svg><use href="#step"/></svg></button><button aria-label="Step over"><svg><use href="#step2"/></svg></button><button aria-label="Step out"><svg><use href="#step3"/></svg></button><button aria-label="Run to cursor"><svg><use href="#step4"/></svg></button><button aria-label="Breakpoint"><svg><use href="#handg"/></svg></button><button aria-label="Remove breakpoints"><svg><use href="#handx"/></svg></button>
  </div>
  <div class="bar bar-zoom"><i class="grip"></i>
    <button aria-label="Zoom in"><svg><use href="#zin"/></svg></button><button aria-label="Zoom out"><svg><use href="#zout"/></svg></button><button aria-label="Zoom area"><svg><use href="#zarea"/></svg></button><button aria-label="Zoom fit"><svg><use href="#zfit"/></svg></button><button aria-label="Full screen"><svg><use href="#full"/></svg></button>
  </div>
</div>

<main class="work">
  <div class="sheet">
    <div class="canvas">
      <svg class="schematic" viewBox="5 111 850 330" width="850" height="330">
        <g class="wire">
          <path d="M357.500 190v110.500H400M375.500 190v75M375.500 228.500H432M470 228.500h76.500v35.500M430 300.500h116M492.500 280v60M492.500 384v24M456.500 300.500v108H650M686 408.500h40.500v-126M654 282.500h100M796 282.500h20.500V320M582.500 210v22M582.500 326v22"/>
        </g>
        <g class="part">
          <path d="M357.500 188v14M375.500 188v14M393.500 188v14M375.500 263v10M366 273.500h19M369 276.500h13M372 279.500h7M492.500 228v28M492.500 264v22M492.500 374v10"/>
          <path stroke-width="2" d="M483 257h19M483 263h19M666 399v19M671 399v19"/>
          <path d="M564 192.500h37M582.500 192v18M564 363.500h37M582.500 345v18M816.500 319v8M807 327.500h19M810 330.500h13M813 333.500h7M646 408.500h19M672 408.500h18"/>
          <path d="M492.500 335v9l4 3-8 5 8 5-8 5 8 5-8 4 4 3v10"/>
        </g>
        <use href="#rh" x="425" y="222" width="54" height="12"/>
        <use href="#rh" x="389" y="294" width="54" height="12"/>
        <use href="#rh" x="749" y="276" width="54" height="12"/>
        <g class="amp">
          <path d="M564.500 246.500v72l72-36zM546 264.500h18M546 300.500h18M636 282.500h19M582.500 232v23M600.500 228v36M618.500 228v45M582.500 309v22M600.500 300v36M570 264.500h7M573.500 261v7M570 300.500h7"/>
        </g>
        <g class="dot"><circle cx="375.500" cy="237" r="2"/><circle cx="492" cy="228" r="2"/><circle cx="456" cy="300" r="2"/><circle cx="492" cy="408" r="2"/><circle cx="726" cy="282" r="2"/></g>
        <path fill="#bcd8bc" stroke="#111" stroke-width="2" d="M349 157h53v35h-53z"/>
        <path fill="#ccc" stroke="#fff" d="M351.500 161.500h13v9h-13zM368.500 161.500h13v9h-13zM386.500 161.500h13v9h-13z"/>
        <path fill="none" stroke="#000" d="M352 168l3-3 3 3 3-3 3 3M370 165c2 0 3 4 5 3s3-4 5-3M387 168.500h3v-4h4v4h2v-4h3M354 179.500h6M357 177v6M390 179.500h6M357.500 184v8M375.500 184v8M393.500 184v8"/>
        <g fill="#9bb" stroke="#000"><circle cx="357" cy="186" r="2.500"/><circle cx="375" cy="186" r="2.500"/><circle cx="393" cy="186" r="2.500"/></g>
        <text class="mono" x="358" y="149">XFG1</text>
        <g class="lbl">
          <text x="443" y="217">R3</text><text x="431" y="246">1.0kΩ</text><text x="503" y="247">C2</text><text x="504" y="263">680pF</text>
          <text x="407" y="289">R1</text><text x="395" y="318">1.0kΩ</text><text x="498" y="346">R4</text><text x="499" y="362">680Ω</text>
          <text x="568" y="186">VCC</text><text x="602" y="205">15V</text><text x="601" y="358">VEE</text><text x="570" y="377">-15V</text>
          <text x="659" y="392">C1</text><text x="653" y="432">100pF</text><text x="767" y="271">R2</text><text x="755" y="300">1.0kΩ</text>
        </g>
        <g class="lbl net">
          <text x="360" y="249">4</text><text x="378" y="249">0</text><text x="484" y="225">3</text><text x="495" y="308">5</text><text x="569" y="405">1</text><text x="729" y="344">2</text><text x="819" y="299">0</text><text x="585" y="218">VCC</text><text x="585" y="339">VEE</text>
        </g>
        <g class="lbl dev"><text x="638" y="240">U1</text><text x="620" y="314">LT1223CJ8</text></g>
        <g class="pin"><text x="546" y="263">3</text><text x="546" y="299">2</text><text x="584" y="239">7</text><text x="602" y="239">1</text><text x="620" y="239">5</text><text x="640" y="281">6</text><text x="584" y="325">4</text><text x="602" y="325">8</text></g>
      </svg>
    </div>
    <div class="vscroll"><button aria-label="Scroll up"><svg class="ic"><use href="#chev"/></svg></button><i class="thumb"></i><button aria-label="Scroll down"><svg class="ic turn180"><use href="#chev"/></svg></button></div>
    <div class="hscroll"><button aria-label="Scroll left"><svg class="ic turn270"><use href="#chev"/></svg></button><i class="thumb"></i><button aria-label="Scroll right"><svg class="ic turn90"><use href="#chev"/></svg></button></div>
  </div>
  <aside class="instruments"><i class="hgrip"></i>
    <button aria-label="Multimeter"><svg><use href="#m1"/></svg></button><button aria-label="Function generator"><svg><use href="#inst"/></svg></button><button aria-label="Wattmeter"><svg><use href="#inst2"/></svg></button><button aria-label="Oscilloscope"><svg><use href="#osc"/></svg></button><button aria-label="Four channel oscilloscope"><svg><use href="#osc2"/></svg></button><button aria-label="Bode plotter"><svg><use href="#bode"/></svg></button><button aria-label="Frequency counter"><svg><use href="#inst"/></svg></button><button aria-label="Word generator"><svg><use href="#inst"/></svg></button><button aria-label="Logic converter"><svg><use href="#bode"/></svg></button><button aria-label="Logic analyzer"><svg><use href="#logic"/></svg></button><button aria-label="IV analyzer"><svg><use href="#iv"/></svg></button><button aria-label="Distortion analyzer"><svg><use href="#inst"/></svg></button><button aria-label="Spectrum analyzer"><svg><use href="#spec"/></svg></button><button aria-label="Network analyzer"><svg><use href="#bode"/></svg></button><button aria-label="Agilent generator"><svg><use href="#ag"/></svg></button><button aria-label="Agilent multimeter"><svg><use href="#ag2"/></svg></button><button aria-label="Agilent oscilloscope"><svg><use href="#ag3"/></svg></button><button aria-label="Tektronix oscilloscope"><svg><use href="#ag3"/></svg></button><i class="hsep"></i>
    <button aria-label="Measurement probe"><svg><use href="#volt"/></svg></button><button class="more" aria-label="Probe options"><svg><use href="#right"/></svg></button>
    <button aria-label="LabVIEW instrument"><svg><use href="#lvi"/></svg></button><button class="more" aria-label="LabVIEW options"><svg><use href="#right"/></svg></button><i class="hsep"></i>
    <button aria-label="NI ELVISmx"><svg><use href="#clampg"/></svg></button><button class="more dim" aria-label="ELVIS options"><svg><use href="#right"/></svg></button><i class="hsep"></i>
    <button aria-label="Current probe"><svg><use href="#probe"/></svg></button>
  </aside>

  <section class="win fgen" aria-label="Function generator">
    <div class="wtitle"><h2>Function generator-XFG1</h2><button class="wb close" aria-label="Close"><svg class="ic"><use href="#x"/></svg></button></div>
    <form class="fbody">
      <fieldset class="waves"><legend>Waveforms</legend>
        <button type="button" class="on" aria-label="Sine"><svg width="48" height="10"><path fill="none" stroke="#000" d="M1 7c6-7 11-7 16-3s10 5 16 0 9-4 13 1"/></svg></button><button type="button" aria-label="Triangle"><svg width="48" height="10"><path fill="none" stroke="#000" d="M1 7l10-5 10 5 9-5 10 5 6-4"/></svg></button><button type="button" aria-label="Square"><svg width="48" height="10"><path fill="none" stroke="#000" d="M1 7.500h9.500v-5h8v5h9v-5h8v5h10"/></svg></button>
      </fieldset>
      <fieldset class="sig"><legend>Signal options</legend>
        <div class="rows">
          <label for="fr">Frequency:</label><input id="fr" value="100"><input aria-label="Frequency unit" value="kHz">
          <label for="du">Duty cycle:</label><input id="du" value="50" disabled><input aria-label="Duty unit" value=" %" disabled>
          <label for="am">Amplitude:</label><input id="am" value="100"><input aria-label="Amplitude unit" value="mVp">
          <label for="of">Offset:</label><input id="of" value="0"><input aria-label="Offset unit" value=" V">
        </div>
        <button type="button" class="rise" disabled>Set rise/Fall time</button>
      </fieldset>
      <div class="terms">
        <label>+<input type="radio" name="t1" checked disabled></label><label>Common<input type="radio" name="t2" checked disabled></label><label>–<input type="radio" name="t3" disabled></label>
      </div>
    </form>
  </section>

  <section class="win grapher" aria-label="Grapher View">
    <div class="wtitle"><h2>Grapher View</h2>
      <div class="winbtns"><button class="wb faint" aria-label="Minimize"><svg class="ic"><use href="#min"/></svg></button><button class="wb" aria-label="Maximize"><svg class="ic"><use href="#max"/></svg></button><button class="wb close" aria-label="Close"><svg class="ic"><use href="#x"/></svg></button></div>
    </div>
    <div class="gbody">
      <nav class="gmenu"><button>File</button><button>Edit</button><button>View</button><button>Graph</button><button>Trace</button><button>Cursor</button><button>Legend</button><button>Tools</button><button>Help</button></nav>
      <div class="gtools">
        <button aria-label="Open"><svg><use href="#open"/></svg></button><button aria-label="Save"><svg><use href="#save"/></svg></button><i class="sep"></i>
        <button class="dim" aria-label="Undo"><svg><use href="#undo"/></svg></button><button aria-label="Delete"><svg><use href="#del"/></svg></button><button class="navy" aria-label="Copy"><svg><use href="#copy"/></svg></button><button aria-label="Paste"><svg><use href="#pasteg"/></svg></button><i class="sep"></i>
        <button aria-label="Grid"><svg><use href="#rgrid"/></svg></button><button class="sel" aria-label="Legend"><svg><use href="#legend"/></svg></button><button aria-label="Cursors"><svg><use href="#curs"/></svg></button><button class="sel" aria-label="Black and white"><svg><use href="#bw"/></svg></button><i class="sep"></i>
        <button class="sel" aria-label="Lines"><svg><use href="#line"/></svg></button><button aria-label="Points"><svg><use href="#dots"/></svg></button><button aria-label="Lines and points"><svg><use href="#ldots"/></svg></button><i class="sep"></i>
        <button aria-label="Zoom in"><svg><use href="#zin"/></svg></button><button aria-label="Zoom out"><svg><use href="#zout"/></svg></button><button aria-label="Zoom restore"><svg><use href="#zgray"/></svg></button><button class="sel" aria-label="Zoom box"><svg><use href="#zbox"/></svg></button><button aria-label="Zoom horizontal"><svg><use href="#zhor"/></svg></button><button aria-label="Zoom vertical"><svg><use href="#zver"/></svg></button><button aria-label="Pan"><svg><use href="#hand"/></svg></button><i class="sep"></i>
        <button class="serif">A</button><button class="tiny dim">(x,y)</button><i class="sep"></i>
        <button aria-label="Overlay traces"><svg><use href="#over"/></svg></button><button aria-label="Export"><svg><use href="#xport"/></svg></button><i class="sep"></i>
        <button aria-label="Export to Excel"><svg><use href="#xls"/></svg></button><button aria-label="Export to LabVIEW"><svg><use href="#lv"/></svg></button>
      </div>
      <div class="gtabs"><button>Transient Analysis</button><button>Transient Analysis</button><button class="cur">Transient Analysis</button></div>
      <div class="plot">
        <svg class="pick" width="5" height="18"><path fill="#d01010" d="M0 0l5 9-5 9z"/></svg>
        <svg viewBox="303 562 680 316" width="680" height="316">
          <path fill="#f00" d="M348 735C353 715 358 705 364 698C374 686 386 683 400 681C418 679 434 673 450 664C478 648 500 631 526 631C565 631 593 664 632 664C671 664 698 631 737 631C776 631 804 664 843 664C882 664 911 631 950 631C961 631 971 634 979 638V712C971 708 961 706 950 706C911 706 882 739 843 739C804 739 776 706 737 706C698 706 671 739 632 739C593 739 565 706 526 706C500 706 478 719 450 738C434 749 418 754 400 757C386 760 376 764 368 772C357 784 353 797 349 820H348z"/>
          <path fill="none" stroke="#fff" d="M346.500 616v217M343 829.500h636M343 616.500h4M343 646.500h4M343 677.500h4M343 707.500h4M343 737.500h4M343 767.500h4M343 798.500h4M451.500 829v4M557.500 829v4M662.500 829v4M768.500 829v4M873.500 829v4M978.500 829v4"/>
          <g class="ax end"><text x="339" y="629">2</text><text x="339" y="651">1</text><text x="339" y="682">0</text><text x="339" y="712">-1</text><text x="339" y="742">-2</text><text x="339" y="772">-3</text><text x="339" y="803">-4</text><text x="339" y="825">-5</text></g>
          <g class="ax mid"><text x="348" y="849">0</text><text x="451" y="849">5µ</text><text x="557" y="849">10µ</text><text x="663" y="849">15µ</text><text x="768" y="849">20µ</text><text x="874" y="849">25µ</text><text x="968" y="849">30µ</text></g>
          <text class="big mid" x="642" y="582">Design1</text><text class="big mid" x="642" y="607">Transient Analysis</text>
          <text class="axt mid" x="662" y="872">Time (s)</text><text class="axt mid" transform="translate(319 722) rotate(-90)">Voltage (V)</text>
          <g><use href="#tri" x="348" y="724" width="8" height="8"/><use href="#tri" x="408" y="675" width="8" height="8"/><use href="#tri" x="468" y="669" width="8" height="8"/><use href="#tri" x="528" y="629" width="8" height="8"/><use href="#tri" x="588" y="683" width="8" height="8"/><use href="#tri" x="648" y="701" width="8" height="8"/><use href="#tri" x="708" y="699" width="8" height="8"/><use href="#tri" x="768" y="699" width="8" height="8"/><use href="#tri" x="828" y="692" width="8" height="8"/><use href="#tri" x="888" y="668" width="8" height="8"/><use href="#tri" x="948" y="628" width="8" height="8"/></g>
        </svg>
        <div class="key"><svg width="5" height="14"><path fill="#d01010" d="M0 0l5 7-5 7z"/></svg><span class="tick"><input type="checkbox" id="v2" checked><svg width="9" height="9"><path fill="none" stroke="#000" stroke-width="2" d="M1 4l3 3 4-6"/></svg></span><label for="v2">V(2)</label></div>
      </div>
      <div class="gstatus">Selected Diagram:Transient Analysis<i class="sizer"></i></div>
    </div>
  </section>
</main>

<div class="doctabs">
  <button class="doctab"><svg class="ic"><use href="#doc"/></svg>Design1 *</button>
  <div class="tabnav"><button aria-label="Previous tab"><svg><use href="#left"/></svg></button><button aria-label="Next tab"><svg><use href="#right"/></svg></button><button aria-label="Tab list"><svg class="lg"><use href="#rest"/></svg></button></div>
</div>
<footer class="status"><span class="s1">For Help, press F1</span><span class="s2">-</span><span class="s3"></span><span class="s4">Tran: 0.030 ms</span><span class="s5"></span><i class="sizer"></i></footer>
<div class="taskbar">
  <button class="start"><svg width="20" height="18"><path fill="#f0562a" d="M3 3q3-3 7-1L9 8Q5 6 2 8z"/><path fill="#8ccf3c" d="M11 3q4 2 8-1l-2 6q-3 3-7 1z"/><path fill="#5a9cf4" d="M2 9q3-2 7 0l-2 6q-3-2-7 0z"/><path fill="#fccf2c" d="M10 10q3 2 7 0l-2 6q-3 2-7 0z"/></svg>Start</button>
  <div class="tasks">
    <button><svg class="ic"><circle cx="8" cy="8" r="7" fill="#e8701a"/><circle cx="8" cy="6.500" r="4.500" fill="#2858a8"/><path fill="#f8b030" d="M1 6c2 0 3 2 5 3s5 1 8-2c0 9-12 11-13 1z"/></svg>Hifi erősítők tervezés...</button>
    <button><svg class="ic"><path fill="#fff" d="M1 1h14v14H1z"/><path fill="none" stroke="#c01030" stroke-width="2" d="M2 3h7M5 3v9h4"/><circle cx="12" cy="4" r="2.500" fill="#083"/><circle cx="12" cy="11" r="2.500" fill="#018"/></svg>CircuitMaker</button>
    <button><svg class="ic"><path fill="#e8901a" stroke="#fff" d="M1.500 1.500h9v10h-9z"/><path fill="#f0b050" stroke="#fff" stroke-width="2" d="M5 4h9v10H5z"/><circle cx="9.500" cy="8" r="2" fill="#c03020"/></svg>CAM01777.jpg – Win...</button>
    <button><svg class="ic"><path fill="#fff" stroke="#c8d8f8" d="M1.500 2.500h13v11h-13z"/><path fill="#88a8e8" d="M1 2h14v2H1z"/></svg>WLXPhotoGallery.exe...</button>
    <button class="cur"><svg class="ic"><use href="#app"/></svg>Design1 - Multisim - [...</button>
  </div>
  <span class="lang">HU</span>
  <div class="tray">WLXPhotoGallery.exe</div>
</div>
</body>
</html>
```
FILE: styles.css
```css
* { box-sizing: border-box; }
body {
  margin: 0;
  min-height: 100vh;
  display: flex;
  flex-direction: column;
  overflow: hidden;
  background: #ece9d8;
  color: #000;
  font: 11px/14px "DejaVu Sans Condensed", "Noto Sans", sans-serif;
}
button, input, select { font: inherit; color: inherit; margin: 0; }
button { background: none; border: 0; padding: 0; white-space: nowrap; }
svg { display: block; flex: none; }
.defs { position: absolute; width: 0; height: 0; }
.ic { width: 16px; height: 16px; }
h1, h2 { margin: 0; font: 600 13px/16px "Open Sans", sans-serif; }

/* main title bar */
.titlebar {
  display: flex; align-items: center; gap: 4px; height: 27px; padding: 0 2px;
  background: linear-gradient(#9db9f0, #7a96df 20%, #7b99e1 55%, #82a8ea 80%, #7490dc);
  color: #dce6fa;
}
.titlebar h1 { font-weight: 500; }
.winbtns { display: flex; gap: 2px; margin-left: auto; }
.wb {
  display: flex; align-items: center; justify-content: center;
  width: 21px; height: 21px; color: #fff;
  border: 1px solid #dce6fc; border-radius: 3px;
  background: linear-gradient(135deg, #7a9cf0, #3a64d8);
}
.wb.close { background: linear-gradient(135deg, #c89098, #a85068); }

/* menus */
.menubar { display: flex; align-items: center; height: 24px; padding: 0 3px 0 4px; border-top: 1px solid #fff; border-bottom: 1px solid #aca899; }
.menubar > button { padding: 0 6px; }
.menubar > .ic { margin-right: 2px; }
.childbtns { display: flex; gap: 1px; margin-left: auto; padding-top: 3px; }
.childbtns button { width: 14px; height: 14px; border: 1px solid; border-color: #fff #716f64 #716f64 #fff; }
.childbtns svg { width: 12px; height: 12px; }

/* toolbars */
.toolrow { display: flex; height: 27px; border-bottom: 1px solid #fff; }
.bar { display: flex; align-items: center; height: 27px; padding-right: 2px; border-right: 1px solid #aca899; border-bottom: 1px solid #aca899; }
.bar-main { margin-left: 72px; }
.bar-sim { margin-left: auto; }
.bar-run { margin-left: 11px; }
.bar-zoom { margin-left: 20px; }
.grip { width: 7px; height: 21px; margin: 0 1px 0 3px; background: linear-gradient(90deg, #fff 1px, #ece9d8 1px 2px, #aca899 2px 3px, #ece9d8 3px 4px, #fff 4px 5px, #ece9d8 5px 6px, #aca899 6px); }
.bar button { display: flex; align-items: center; justify-content: center; width: 22px; height: 22px; }
.bar button svg, .gtools svg { width: 16px; height: 16px; }
.bar .wide svg { width: 18px; }
.bar .switch { width: 36px; }
.bar .switch svg { width: 32px; height: 18px; }
.sep { width: 8px; height: 20px; background: linear-gradient(90deg, transparent 3px, #aca899 3px 4px, #fff 4px 5px, transparent 5px); }
.bar .split { width: 34px; gap: 3px; border: 1px solid; border-color: #aca899 #fff #fff #aca899; background: #f5f3ea; }
.bar .slim { width: 12px; }
.bar svg.car { width: 8px; height: 8px; }
.bar .down { background: #f5f3ea; border: 1px solid; border-color: #aca899 #fff #fff #aca899; }
.bar .misc { font: 7px/10px "DejaVu Sans Condensed", sans-serif; }
.dim { color: #a5a290; }
.blue { color: #0018c0; }
.navy { color: #000050; }
.combo { position: relative; display: block; width: 120px; margin-left: 2px; }
.combo select { display: block; width: 120px; height: 21px; padding: 0 4px; appearance: none; background: #fff; border: 1px solid #7f9db9; border-radius: 0; }
.combo .drop { position: absolute; right: 2px; top: 2px; width: 16px; height: 17px; background: #c1d2fb; border-radius: 2px; transform: rotate(180deg); pointer-events: none; }

/* work area */
.work { position: relative; flex: 1; display: flex; border-top: 1px solid #716f64; }
.sheet {
  flex: 1; display: grid; grid-template: minmax(0, 1fr) 16px / minmax(0, 1fr) 16px;
  margin: 2px 3px 5px 0; padding: 0 3px;
  border: 1px solid #aca899; border-top: 3px solid #8f8c7e; border-left: 2px solid #aca899;
}
.canvas {
  background: linear-gradient(90deg, transparent 1px, #fff 1px) 1px 0 / 9px 9px, linear-gradient(#000 1px, #fff 1px) 1px 0 / 9px 9px;
}
.schematic { max-width: 100%; }
.wire path { fill: none; stroke: #c02828; }
.part path { fill: none; stroke: #000; }
.amp path { fill: none; stroke: #1c1c90; }
.dot { fill: #c01818; }
.lbl { font: bold 13px "Liberation Sans", sans-serif; fill: #111; }
.net { fill: #e02828; }
.dev { fill: #1c1cb0; }
.pin { font: 9px "Liberation Sans", sans-serif; fill: #8c8cc8; }
.mono { font: bold 14px "Liberation Mono", monospace; fill: #222; }
.vscroll, .hscroll { display: flex; background: #f6f5f0; }
.vscroll { flex-direction: column; }
.hscroll { grid-column: 1; }
.vscroll button, .hscroll button { width: 16px; height: 16px; border: 1px solid #fff; border-radius: 3px; background: #c3d3fb; }
.vscroll .ic, .hscroll .ic { width: 14px; height: 14px; }
.vscroll .thumb { flex: none; height: 75%; margin: 63px 0 auto; background: linear-gradient(90deg, #d0dcfc, #bccbf8); border: 1px solid #fff; border-radius: 2px; }
.hscroll .thumb { width: 66%; margin-right: auto; background: linear-gradient(#d0dcfc, #bccbf8); border: 1px solid #fff; border-radius: 2px; }
.turn90 { transform: rotate(90deg); }
.turn180 { transform: rotate(180deg); }
.turn270 { transform: rotate(270deg); }
.instruments { display: flex; flex-direction: column; align-items: center; align-self: flex-start; width: 26px; border-left: 1px solid #aca899; border-bottom: 1px solid #aca899; }
.instruments button { display: flex; align-items: center; justify-content: center; width: 24px; height: 21px; }
.instruments svg { width: 16px; height: 16px; }
.instruments .more { height: 10px; }
.instruments .more svg { width: 6px; height: 6px; }
.hgrip { width: 22px; height: 6px; margin: 4px 0 2px; border-top: 1px solid #fff; border-bottom: 1px solid #aca899; }
.hsep { width: 20px; height: 1px; margin: 4px 0; background: #aca899; }

/* floating windows */
.win { position: absolute; border-radius: 7px 7px 0 0; }
.wtitle { display: flex; align-items: center; justify-content: space-between; }
.fgen { left: 79px; top: 65px; width: 215px; padding: 0 4px 4px; background: #7286d8; }
.fgen .wtitle { height: 29px; margin: 0 -4px; padding: 3px 6px 0 8px; border-radius: 7px 7px 0 0; background: linear-gradient(#8ca8ee, #7a96df 20%, #7b99e1 55%, #82a8ea 80%, #7490dc); color: #dce6fa; }
.fbody { height: 205px; padding: 2px 5px 0 3px; background: #ece9d8; }
fieldset { margin: 0; min-width: 0; border: 1px solid #d0cdb8; border-radius: 4px; }
legend { padding: 0 2px; color: #0a3ac0; line-height: 13px; }
.waves { display: flex; height: 38px; padding: 0 3px 0 9px; }
.waves legend { margin-left: -3px; }
.sig legend { margin-left: 4px; }
.waves button { display: inline-flex; align-items: center; justify-content: center; width: 61px; height: 19px; border: 1px solid; border-color: #fff #716f64 #716f64 #fff; }
.waves .on { background: #f6f4ec; border-color: #716f64 #fff #fff #716f64; }
.sig { height: 122px; margin-top: -2px; padding: 2px 3px 0 2px; }
.rows { display: grid; grid-template-columns: 1fr 76px 44px; grid-auto-rows: 20px; padding-left: 7px; align-items: center; }
.rows input { width: 100%; height: 20px; padding: 0 5px 1px; background: #fff; border: 1px solid #7f9db9; border-radius: 0; }
.rows input + input { padding: 0 0 2px 4px; border-left: 0; }
.rows input:disabled { background: #ece9d8; color: #aca899; }
.rise { display: block; width: 122px; height: 21px; margin: 4px auto 0 34px; border: 1px solid #c9c7ba; border-radius: 2px; background: #f5f4ea; color: #a1a192; }
.terms { display: flex; justify-content: space-between; padding: 7px 15px 0 16px; }
.terms label { display: flex; flex-direction: column; align-items: center; gap: 1px; }
.terms input { appearance: none; width: 13px; height: 13px; border: 1px solid #cac8bb; border-radius: 50%; }
.terms input:checked { background: radial-gradient(#c2c0b2 2px, transparent 3px); }

.grapher { left: 294px; top: 356px; width: 698px; padding: 0 4px 4px; background: #0a46d8; }
.grapher .wtitle { height: 29px; margin: 0 -4px; padding: 4px 6px 0 8px; border-radius: 7px 7px 0 0; background: linear-gradient(#2a7cf8, #0055e4 20%, #0056e8 50%, #0366fb 85%, #0048c8); color: #fff; }
.grapher .close { background: linear-gradient(135deg, #f09878, #d04018); }
.grapher .faint { color: #a8c0f0; border-color: #8aa8ec; }
.gbody { background: #ece9d8; }
.gmenu { display: flex; align-items: center; height: 24px; padding: 2px 0 0 3px; border-bottom: 1px solid #cfccba; }
.gmenu button { padding: 0 6px; }
.gtools { display: flex; align-items: center; height: 24px; border-top: 1px solid #fff; border-bottom: 1px solid #aca899; }
.gtools button { display: flex; align-items: center; justify-content: center; width: 23px; height: 22px; }
.gtools .sep { width: 6px; }
.gtools .sel { background: #fff; border: 1px solid #98b0d0; border-radius: 3px; }
.gtools .serif { font: bold 15px "Liberation Serif", serif; }
.gtools .tiny { font: italic 8px "Liberation Sans", sans-serif; }
.gtabs { display: flex; align-items: flex-end; height: 23px; padding-left: 3px; }
.gtabs button { height: 19px; padding: 0 4px 0 5px; border-right: 1px solid #716f64; }
.gtabs .cur { height: 22px; padding-bottom: 3px; border-top: 1px solid #fff; border-left: 1px solid #fff; }
.plot { position: relative; height: 345px; margin: 0 4px 0 5px; background: #000; color: #fff; }
.pick { position: absolute; left: -5px; top: 175px; }
.plot text { fill: #fff; font-family: "Liberation Sans", sans-serif; }
.ax { font-size: 14px; }
.mid { text-anchor: middle; }
.end { text-anchor: end; }
.big { font-size: 22px; }
.axt { font-size: 16px; }
.key { display: flex; align-items: center; gap: 1px; padding: 7px 0 0 4px; font-family: "Liberation Sans", sans-serif; }
.tick { position: relative; width: 9px; height: 9px; }
.tick input { display: block; width: 9px; height: 9px; appearance: none; background: #fff; }
.tick svg { position: absolute; left: 0; top: 0; pointer-events: none; }
.key label { width: 39px; height: 16px; margin: -11px 0 0 3px; border-bottom: 1px solid #e01818; }
.gstatus { display: flex; align-items: center; justify-content: space-between; height: 21px; margin-top: 3px; padding: 2px 0 0 1px; border-top: 1px solid #8f8c7e; }
.sizer { width: 12px; height: 12px; align-self: flex-end; background: radial-gradient(#b8b4a2 1px, transparent 2px) 0 0 / 4px 4px; clip-path: polygon(100% 0, 100% 100%, 0 100%); }

/* bottom of the frame */
.doctabs { display: flex; justify-content: space-between; height: 26px; border-top: 1px solid #716f64; border-bottom: 1px solid #c8c5b2; }
.doctab { display: flex; align-items: center; gap: 3px; height: 24px; margin-left: 2px; padding: 1px 3px 0; border: 1px solid #000; border-top: 0; border-left-color: #fff; border-radius: 0 0 3px 3px; }
.tabnav { display: flex; align-items: center; padding-right: 28px; }
.tabnav button { display: flex; align-items: center; justify-content: center; width: 15px; height: 16px; border: 1px solid; border-color: #fff #aca899 #aca899 #fff; }
.tabnav svg { width: 6px; height: 6px; }
.tabnav .lg { width: 12px; height: 12px; }
.status { display: flex; align-items: center; height: 18px; padding: 2px 0 0 1px; }
.status span { height: 14px; }
.s1 { width: 700px; }
.s2 { width: 147px; }
.s3 { flex: 1; border-left: 1px solid #c8c5b2; }
.s4 { width: 157px; padding-left: 5px; border-left: 1px solid #c8c5b2; }
.s5 { width: 80px; border-left: 1px solid #c8c5b2; }
.taskbar { display: flex; align-items: center; height: 30px; color: #fff; background: linear-gradient(#4888f0, #2560e0 15%, #245edb 80%, #1a48b0); }
.start { display: flex; align-items: center; gap: 5px; width: 98px; height: 30px; padding-left: 10px; border-radius: 0 9px 9px 0; background: linear-gradient(#5cb85c, #3a963a 20%, #3c9c3c 75%, #2c7a2c); font: italic bold 17px/20px "Open Sans", sans-serif; }
.tasks { display: flex; flex: 1; gap: 2px; max-width: 800px; margin-left: 9px; }
.tasks button { display: flex; flex: 1 1 0; align-items: center; gap: 4px; min-width: 0; height: 25px; padding: 1px 10px 0; border-radius: 3px; background: linear-gradient(#5c9cf8, #3c80f0 20%, #3a7cec 85%, #2c62cc); }
.tasks .cur { background: #1c50b8; }
.lang { margin-left: auto; padding-right: 28px; }
.tray { width: 140px; height: 29px; padding: 5px 0 0 5px; overflow: hidden; border: 1px solid #b8ccf4; background: #7b9ae0; color: #eef3ff; white-space: nowrap; font: 13px/18px "Open Sans", sans-serif; }
```
